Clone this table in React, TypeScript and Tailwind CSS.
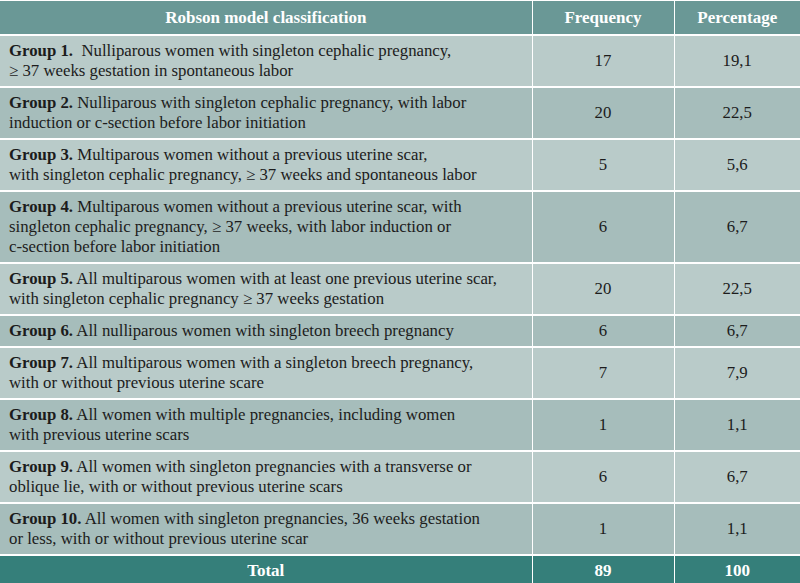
import React from 'react';

interface Row {
  group: string;
  text: React.ReactNode;
  freq: string;
  pct: string;
}

const rows: Row[] = [
  {
    group: 'Group 1.',
    text: <>&nbsp; Nulliparous women with singleton cephalic pregnancy,<br />≥ 37 weeks gestation in spontaneous labor</>,
    freq: '17',
    pct: '19,1',
  },
  {
    group: 'Group 2.',
    text: <> Nulliparous with singleton cephalic pregnancy, with labor<br />induction or c-section before labor initiation</>,
    freq: '20',
    pct: '22,5',
  },
  {
    group: 'Group 3.',
    text: <> Multiparous women without a previous uterine scar,<br />with singleton cephalic pregnancy, ≥ 37 weeks and spontaneous labor</>,
    freq: '5',
    pct: '5,6',
  },
  {
    group: 'Group 4.',
    text: <> Multiparous women without a previous uterine scar, with<br />singleton cephalic pregnancy, ≥ 37 weeks, with labor induction or<br />c-section before labor initiation</>,
    freq: '6',
    pct: '6,7',
  },
  {
    group: 'Group 5.',
    text: <> All multiparous women with at least one previous uterine scar,<br />with singleton cephalic pregnancy ≥ 37 weeks gestation</>,
    freq: '20',
    pct: '22,5',
  },
  {
    group: 'Group 6.',
    text: <> All nulliparous women with singleton breech pregnancy</>,
    freq: '6',
    pct: '6,7',
  },
  {
    group: 'Group 7.',
    text: <> All multiparous women with a singleton breech pregnancy,<br />with or without previous uterine scare</>,
    freq: '7',
    pct: '7,9',
  },
  {
    group: 'Group 8.',
    text: <> All women with multiple pregnancies, including women<br />with previous uterine scars</>,
    freq: '1',
    pct: '1,1',
  },
  {
    group: 'Group 9.',
    text: <> All women with singleton pregnancies with a transverse or<br />oblique lie, with or without previous uterine scars</>,
    freq: '6',
    pct: '6,7',
  },
  {
    group: 'Group 10.',
    text: <> All women with singleton pregnancies, 36 weeks gestation<br />or less, with or without previous uterine scar</>,
    freq: '1',
    pct: '1,1',
  },
];

const App: React.FC = () => {
  return (
    <div className="w-[800px] h-[583px] overflow-hidden bg-white [font-family:'Liberation_Serif',serif] text-[16.8px] text-[#1c1c1c]">
      <table className="w-[800px] border-collapse table-fixed">
        <colgroup>
          <col className="w-[532px]" />
          <col className="w-[142px]" />
          <col className="w-[126px]" />
        </colgroup>
        <thead>
          <tr className="h-[34px] bg-[#6a9896] text-white font-bold text-[17px]">
            <th className="border-t border-b-2 border-r border-white text-center align-middle">Robson model classification</th>
            <th className="border-t border-b-2 border-r border-white text-center align-middle">Frequency</th>
            <th className="border-t border-b-2 border-white text-center align-middle">Percentage</th>
          </tr>
        </thead>
        <tbody>
          {rows.map((r, i) => (
            <tr key={r.group} className={i % 2 === 0 ? 'bg-[#b9cbc9]' : 'bg-[#a6bdbb]'}>
              <td className="border-b-2 border-r border-white pl-[9px] pr-1 py-[5px] leading-[20px] align-middle whitespace-nowrap">
                <span className="font-bold">{r.group}</span>
                {r.text}
              </td>
              <td className="border-b-2 border-r border-white text-center align-middle leading-[20px]">{r.freq}</td>
              <td className="border-b-2 border-white text-center align-middle leading-[20px]">{r.pct}</td>
            </tr>
          ))}
          <tr className="h-[31px] bg-[#357f7a] text-white font-bold text-[17px]">
            <td className="border-r border-white text-center align-middle">Total</td>
            <td className="border-r border-white text-center align-middle">89</td>
            <td className="text-center align-middle">100</td>
          </tr>
        </tbody>
      </table>
    </div>
  );
};

export default App;
